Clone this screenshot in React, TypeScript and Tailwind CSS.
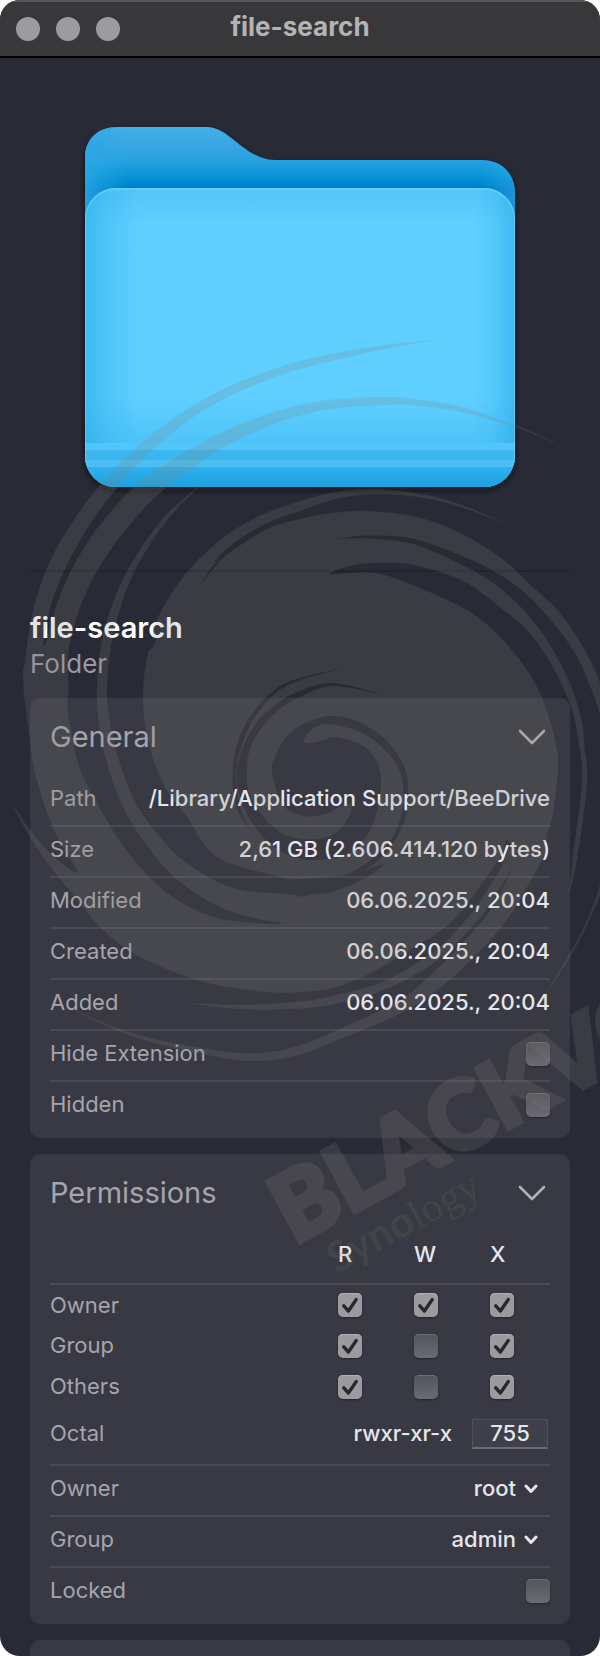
import { useState } from 'react';
import type { ReactNode } from 'react';
import clsx from 'clsx';

type Point = [number, number];
type RibbonPoint = [number, number, number];

// Closed smooth curve through the given points
function blob(points: Point[]) {
  const n = points.length;
  let d = `M${points[0][0]} ${points[0][1]}`;
  for (let i = 0; i < n; i++) {
    const [p0, p1, p2, p3] = [-1, 0, 1, 2].map((k) => points[(i + k + n) % n]);
    const c1 = [p1[0] + (p2[0] - p0[0]) / 6, p1[1] + (p2[1] - p0[1]) / 6];
    const c2 = [p2[0] - (p3[0] - p1[0]) / 6, p2[1] - (p3[1] - p1[1]) / 6];
    d += `C${c1[0].toFixed(1)} ${c1[1].toFixed(1)} ${c2[0].toFixed(1)} ${c2[1].toFixed(1)} ${p2[0]} ${p2[1]}`;
  }
  return d + 'Z';
}

// Brush stroke with its own width at each point: [x, y, width]
function ribbon(points: RibbonPoint[]) {
  const left: Point[] = [];
  const right: Point[] = [];
  points.forEach(([x, y, w], i) => {
    const a = points[Math.max(0, i - 1)];
    const b = points[Math.min(points.length - 1, i + 1)];
    const len = Math.hypot(b[0] - a[0], b[1] - a[1]);
    const nx = (-(b[1] - a[1]) / len) * (w / 2);
    const ny = ((b[0] - a[0]) / len) * (w / 2);
    left.push([x + nx, y + ny]);
    right.unshift([x - nx, y - ny]);
  });
  return blob([...left, ...right]);
}

const swirlBody = blob([
  [24, 690], [27, 660], [60, 640], [110, 660], [150, 650], [160, 620], [180, 585], [202, 570],
  [227, 554], [267, 529], [300, 519], [333, 513], [367, 511], [417, 517], [460, 533], [500, 557],
  [533, 587], [560, 613], [583, 647], [600, 683], [612, 730], [588, 745], [587, 783], [579, 847],
  [567, 893], [548, 842], [525, 872], [508, 840], [500, 857], [477, 890], [450, 923], [410, 950],
  [367, 975], [333, 988], [300, 992], [267, 992], [217, 985], [177, 973], [133, 953], [103, 930],
  [80, 903], [53, 870], [30, 837], [13, 805], [25, 823], [45, 848], [65, 866], [78, 872],
  [65, 850], [50, 820], [35, 773], [30, 740],
]);

const swirlCuts = [
  // left channel
  blob([
    [80, 600], [68, 650], [67, 700], [73, 740], [80, 770], [97, 803], [117, 837], [140, 867],
    [167, 893], [200, 912], [233, 921], [293, 922], [300, 898], [333, 892], [367, 877], [383, 864],
    [350, 874], [300, 879], [277, 876], [217, 857], [187, 817], [163, 783], [148, 740], [143, 697],
    [148, 653], [160, 620], [180, 586], [150, 570],
  ]),
  // right channel
  blob([
    [330, 574], [360, 564], [400, 563], [433, 570], [467, 583], [500, 607], [527, 630], [547, 657],
    [563, 687], [573, 713], [580, 750], [582, 783], [574, 847], [566, 896], [547, 845], [553, 813],
    [558, 767], [555, 740], [543, 700], [527, 670], [500, 637], [467, 610], [417, 587], [375, 573],
  ]),
  ribbon([
    [335, 539, 0], [367, 537, 3], [407, 540, 5], [443, 552, 7], [487, 573, 10], [520, 597, 13],
    [547, 627, 15], [567, 657, 18], [582, 690, 18], [592, 722, 20], [600, 760, 24],
  ]),
  // eye
  blob([
    [272, 773], [275, 757], [283, 741], [295, 729], [310, 721], [330, 716], [352, 719], [372, 729],
    [388, 742], [402, 762], [408, 782], [406, 815], [394, 842], [374, 864], [345, 877], [371, 860],
    [390, 841], [402, 813], [403, 786], [397, 765], [383, 748], [366, 735], [345, 727], [325, 724],
    [311, 730], [304, 742], [318, 742], [333, 737], [350, 740], [366, 748], [378, 764], [381, 785],
    [376, 815], [366, 837], [346, 855], [318, 860], [290, 856], [262, 836], [245, 810], [237, 780],
    [240, 756], [254, 726], [276, 704], [300, 691], [333, 683], [380, 694], [333, 686], [302, 696],
    [280, 709], [260, 730], [249, 752], [247, 780], [251, 797], [266, 820], [288, 836], [318, 839],
    [338, 831], [351, 812], [347, 804], [326, 814], [304, 816], [283, 805],
  ]),
  ribbon([
    [343, 668, 0], [300, 679, 2], [277, 690, 3], [255, 713, 4], [241, 740, 5], [235, 765, 4],
    [235, 790, 4], [240, 812, 3], [250, 830, 0],
  ]),
  // thin split along the upper left rim
  ribbon([[200, 585, 0], [222, 557, 3], [245, 538, 4], [267, 526, 4], [300, 515, 6]]),
];

const swirlStrokes = [
  ribbon([
    [435, 340, 0], [385, 347, 4], [329, 358, 7], [280, 371, 8], [230, 391, 9], [192, 412, 10],
    [158, 437, 12], [128, 465, 14], [104, 492, 15], [82, 522, 16], [60, 560, 17], [45, 597, 16],
    [37, 632, 16], [33, 665, 16], [33, 700, 16],
  ]),
  ribbon([
    [567, 448, 0], [515, 426, 2], [459, 409, 5], [420, 403, 6], [390, 401, 8], [333, 404, 9],
    [283, 415, 11], [230, 436, 14], [184, 463, 18], [147, 490, 22], [113, 527, 23], [86, 567, 23],
    [68, 607, 23], [57, 650, 23], [54, 700, 25],
  ]),
  ribbon([
    [197, 488, 1], [167, 517, 4], [140, 555, 6], [121, 593, 8], [107, 640, 10], [102, 687, 10],
    [104, 720, 11], [111, 755, 12], [127, 800, 13], [150, 837, 15], [183, 872, 19], [233, 900, 23],
    [300, 910, 26],
  ]),
  ribbon([
    [158, 635, 12], [172, 604, 12], [194, 574, 13], [224, 544, 11], [260, 521, 10], [300, 506, 9],
    [333, 496, 7], [367, 492, 5], [400, 493, 4], [433, 498, 3], [467, 508, 2], [508, 524, 0],
  ]),
  ribbon([
    [517, 845, 10], [505, 870, 9], [487, 900, 10], [465, 928, 9], [433, 958, 9], [383, 986, 8],
    [333, 1000, 8], [300, 1005, 7], [240, 1007, 4], [187, 1003, 0],
  ]),
  ribbon([
    [534, 842, 26], [520, 877, 22], [500, 913, 19], [472, 946, 18], [437, 980, 16], [400, 1007, 12],
    [333, 1037, 9], [300, 1050, 9], [260, 1057, 8], [213, 1053, 6], [133, 1035, 3], [67, 1007, 0],
  ]),
  ribbon([[606, 860, 3], [600, 890, 3], [585, 927, 2], [567, 960, 2], [540, 1003, 0]]),
];

function Watermark() {
  return (
    <svg
      viewBox="0 0 600 1656"
      aria-hidden="true"
      className="pointer-events-none absolute inset-x-0 top-0 w-full"
    >
      <defs>
        <mask id="swirl-cuts" maskUnits="userSpaceOnUse" x="0" y="300" width="640" height="800">
          <rect x="0" y="300" width="640" height="800" fill="#fff" />
          {swirlCuts.map((d) => (
            <path key={d} d={d} fill="#000" />
          ))}
        </mask>
      </defs>
      <g fill="#82827a" opacity="0.2">
        <path d={swirlBody} mask="url(#swirl-cuts)" />
        {swirlStrokes.map((d) => (
          <path key={d} d={d} />
        ))}
      </g>
      <g transform="translate(294 1245) rotate(-28.5)" className="font-['Lato']" fill="#82827a">
        <text className="text-[94px] font-black" stroke="#82827a" strokeWidth="5" opacity="0.2">
          BLACKVO
        </text>
        <text x="24" y="46" className="text-[42px]" opacity="0.14">
          <tspan className="font-bold">Syno</tspan>
          <tspan className="font-['Liberation_Serif']">logy</tspan>
        </text>
      </g>
    </svg>
  );
}

function FolderIcon() {
  return (
    <svg viewBox="75 120 450 380" role="img" aria-label="Folder" className="w-[450px] max-w-full">
      <defs>
        <linearGradient id="folder-back" x1="0" y1="127" x2="0" y2="190" gradientUnits="userSpaceOnUse">
          <stop offset="0" stopColor="#45aee5" />
          <stop offset="0.5" stopColor="#2ba2e0" />
          <stop offset="0.78" stopColor="#0795d8" />
          <stop offset="1" stopColor="#0079c9" />
        </linearGradient>
        <linearGradient id="folder-front" x1="0" y1="188" x2="0" y2="487" gradientUnits="userSpaceOnUse">
          <stop offset="0" stopColor="#54c5f8" />
          <stop offset="0.12" stopColor="#5fcfff" />
          <stop offset="0.7" stopColor="#5fcfff" />
          <stop offset="0.87" stopColor="#4dc2f8" />
        </linearGradient>
        <linearGradient id="folder-side">
          <stop offset="0" stopColor="#1ca4e4" stopOpacity="0.5" />
          <stop offset="0.06" stopColor="#1ca4e4" stopOpacity="0.2" />
          <stop offset="0.13" stopColor="#1ca4e4" stopOpacity="0" />
          <stop offset="0.9" stopColor="#1ca4e4" stopOpacity="0" />
          <stop offset="0.95" stopColor="#1ca4e4" stopOpacity="0.15" />
          <stop offset="1" stopColor="#1ca4e4" stopOpacity="0.5" />
        </linearGradient>
        <linearGradient id="folder-base" x1="0" y1="0" x2="0" y2="1">
          <stop offset="0" stopColor="#2fb1ee" />
          <stop offset="1" stopColor="#1da1e0" />
        </linearGradient>
        <linearGradient id="folder-back-side">
          <stop offset="0" stopColor="#2ba8e6" stopOpacity="0.8" />
          <stop offset="0.1" stopColor="#2ba8e6" stopOpacity="0" />
          <stop offset="0.92" stopColor="#2ba8e6" stopOpacity="0" />
          <stop offset="1" stopColor="#2ba8e6" stopOpacity="0.6" />
        </linearGradient>
        <clipPath id="folder-clip">
          <rect x="85" y="188" width="430" height="299" rx="31" />
        </clipPath>
        <filter id="folder-shadow" x="-5%" y="-5%" width="110%" height="112%">
          <feDropShadow dx="0" dy="3" stdDeviation="3" floodColor="#0b0c14" floodOpacity="0.7" />
        </filter>
      </defs>
      <g filter="url(#folder-shadow)">
        <path
          d="M85 240V158C85 139 98 127 117 127H207C230 127 245 160 275 160H482C502 160 515 174 515 193V240Z"
          fill="url(#folder-back)"
        />
        <rect x="85" y="188" width="430" height="299" rx="31" fill="#4dc2f8" />
      </g>
      <path
        d="M85 240V158C85 139 98 127 117 127H207C230 127 245 160 275 160H482C502 160 515 174 515 193V240Z"
        fill="url(#folder-back-side)"
      />
      <g clipPath="url(#folder-clip)">
        <rect x="85" y="188" width="430" height="299" fill="url(#folder-front)" />
        <rect x="85" y="188" width="430" height="262" fill="url(#folder-side)" />
        <rect x="85" y="443" width="430" height="7" fill="#52c6fb" />
        <rect x="85" y="450" width="430" height="10" fill="#3cb6ef" />
        <rect x="85" y="460" width="430" height="7" fill="#4bbff4" />
        <rect x="85" y="467" width="430" height="20" fill="url(#folder-base)" />
        <rect x="85" y="189" width="430" height="330" rx="31" fill="none" stroke="#7cd8ff" strokeWidth="2" opacity="0.5" />
      </g>
    </svg>
  );
}

function Checkbox({ id, label, defaultChecked }: { id: string; label?: string; defaultChecked?: boolean }) {
  return (
    <span className="grid size-6">
      <input
        id={id}
        type="checkbox"
        aria-label={label}
        defaultChecked={defaultChecked}
        className="peer col-start-1 row-start-1 size-6 appearance-none rounded-[5px] bg-linear-to-b from-[#53535c] to-[#6b6b73] shadow-[inset_0_1px_0_#6e6e76,0_1px_2px_#22222a] checked:from-[#9b9b9f] checked:to-[#9b9b9f] checked:shadow-[inset_0_1px_0_#b0b0b4,0_1px_2px_#22222a]"
      />
      <svg
        viewBox="0 0 24 24"
        aria-hidden="true"
        className="pointer-events-none invisible col-start-1 row-start-1 size-6 peer-checked:visible"
      >
        <path d="M5.8 12.8L10.4 18L18.2 6.6" fill="none" stroke="#28282c" strokeWidth="3.4" strokeLinecap="round" strokeLinejoin="round" />
      </svg>
    </span>
  );
}

function Panel({ title, children }: { title: string; children: ReactNode }) {
  const [open, setOpen] = useState(true);

  return (
    <section className="rounded-[10px] bg-[#393943] px-5 pb-[5px]">
      <h2>
        <button
          type="button"
          aria-expanded={open}
          onClick={() => setOpen(!open)}
          className="flex h-[78px] w-full items-center justify-between pr-1 text-[29px] text-[#a5a5ae]"
        >
          {title}
          <svg viewBox="0 0 28 18" aria-hidden="true" className={clsx('h-[18px] w-7', !open && '-rotate-90')}>
            <path d="M2 3L14 15L26 3" fill="none" stroke="#b0b0b8" strokeWidth="2.6" strokeLinecap="round" strokeLinejoin="round" />
          </svg>
        </button>
      </h2>
      {open && children}
    </section>
  );
}

function Row({ label, htmlFor, children }: { label: string; htmlFor?: string; children: ReactNode }) {
  return (
    <div className="flex h-[51px] items-center justify-between border-b-2 border-[#4a4a55] pb-1 last:border-transparent">
      {htmlFor ? (
        <label htmlFor={htmlFor} className="text-[#a5a5ae]">{label}</label>
      ) : (
        <span className="text-[#a5a5ae]">{label}</span>
      )}
      {children}
    </div>
  );
}

function UserSelect({ id, options }: { id: string; options: string[] }) {
  return (
    <span className="flex items-center gap-2 pr-3">
      <select id={id} className="field-sizing-content appearance-none bg-transparent text-right font-medium">
        {options.map((option) => (
          <option key={option}>{option}</option>
        ))}
      </select>
      <svg viewBox="0 0 14 10" aria-hidden="true" className="h-[10px] w-[14px]">
        <path d="M2 2L7 7.5L12 2" fill="none" stroke="#e6e6ec" strokeWidth="3" strokeLinecap="round" strokeLinejoin="round" />
      </svg>
    </span>
  );
}

const info = [
  { label: 'Path', value: '/Library/Application Support/BeeDrive' },
  { label: 'Size', value: '2,61 GB (2.606.414.120 bytes)' },
  { label: 'Modified', value: '06.06.2025., 20:04' },
  { label: 'Created', value: '06.06.2025., 20:04' },
  { label: 'Added', value: '06.06.2025., 20:04' },
];

const permissions = [
  { who: 'Owner', r: true, w: true, x: true },
  { who: 'Group', r: true, w: false, x: true },
  { who: 'Others', r: true, w: false, x: true },
];

export default function App() {
  return (
    <div className="min-h-screen bg-white font-['Inter',sans-serif] text-[22px] text-[#e6e6ec]">
      <div className="relative flex min-h-screen flex-col overflow-hidden rounded-[20px] bg-[#282a36]">
        {/* Title bar */}
        <header className="grid h-[58px] grid-cols-[1fr_auto_1fr] items-center border-t-2 border-b-2 border-t-[#58585a] border-b-black bg-[#38383a] px-4">
          <div className="flex gap-4">
            <button type="button" aria-label="Close" className="size-6 rounded-full bg-[#9c9c9f]" />
            <button type="button" aria-label="Minimize" className="size-6 rounded-full bg-[#9c9c9f]" />
            <button type="button" aria-label="Zoom" className="size-6 rounded-full bg-[#9c9c9f]" />
          </div>
          <h1 className="pb-1.5 text-[26px] font-bold text-[#b4b4b6]">file-search</h1>
        </header>

        <main className="flex grow flex-col px-[30px]">
          {/* Preview */}
          <div className="flex justify-center border-b-2 border-[#22232d] pt-[62px] pb-[70px]">
            <FolderIcon />
          </div>

          <div className="pt-9 pb-[18px]">
            <p className="text-[29px] leading-10 font-semibold text-white">file-search</p>
            <p className="text-[26px] leading-8 text-[#9a9aa3]">Folder</p>
          </div>

          <div className="flex grow flex-col gap-4">
            <Panel title="General">
              {info.map(({ label, value }) => (
                <Row key={label} label={label}>
                  <span className="font-medium">{value}</span>
                </Row>
              ))}
              <Row label="Hide Extension" htmlFor="hide-extension">
                <Checkbox id="hide-extension" />
              </Row>
              <Row label="Hidden" htmlFor="hidden">
                <Checkbox id="hidden" />
              </Row>
            </Panel>

            <Panel title="Permissions">
              <table className="w-full table-fixed text-left">
                <thead>
                  <tr className="h-[52px] border-b-2 border-[#4a4a55]">
                    <td />
                    <th scope="col" className="w-[76px] pb-1.5 font-medium">R</th>
                    <th scope="col" className="w-[76px] pb-1.5 font-medium">W</th>
                    <th scope="col" className="w-[60px] pb-1.5 font-medium">X</th>
                  </tr>
                </thead>
                <tbody>
                  {permissions.map(({ who, r, w, x }) => (
                    <tr key={who} className="h-[41px]">
                      <th scope="row" className="font-normal text-[#a5a5ae]">{who}</th>
                      <td><Checkbox id={`${who}-r`} label={`${who} read`} defaultChecked={r} /></td>
                      <td><Checkbox id={`${who}-w`} label={`${who} write`} defaultChecked={w} /></td>
                      <td><Checkbox id={`${who}-x`} label={`${who} execute`} defaultChecked={x} /></td>
                    </tr>
                  ))}
                </tbody>
              </table>
              <div className="flex h-[59px] items-center border-b-2 border-[#4a4a55] pr-[2px] pb-1">
                <label htmlFor="octal" className="grow text-[#a5a5ae]">Octal</label>
                <span className="pr-5 font-medium">rwxr-xr-x</span>
                <input
                  id="octal"
                  defaultValue="755"
                  className="h-[30px] w-[76px] border border-[#50505a] border-b-2 border-b-[#6c6c76] bg-[#40404a] text-center font-medium"
                />
              </div>
              <Row label="Owner" htmlFor="owner">
                <UserSelect id="owner" options={['root', 'admin']} />
              </Row>
              <Row label="Group" htmlFor="group">
                <UserSelect id="group" options={['admin', 'wheel', 'staff']} />
              </Row>
              <Row label="Locked" htmlFor="locked">
                <Checkbox id="locked" />
              </Row>
            </Panel>

            <div className="min-h-4 grow rounded-t-[10px] bg-[#393943]" />
          </div>
        </main>

        <Watermark />
      </div>
    </div>
  );
}
